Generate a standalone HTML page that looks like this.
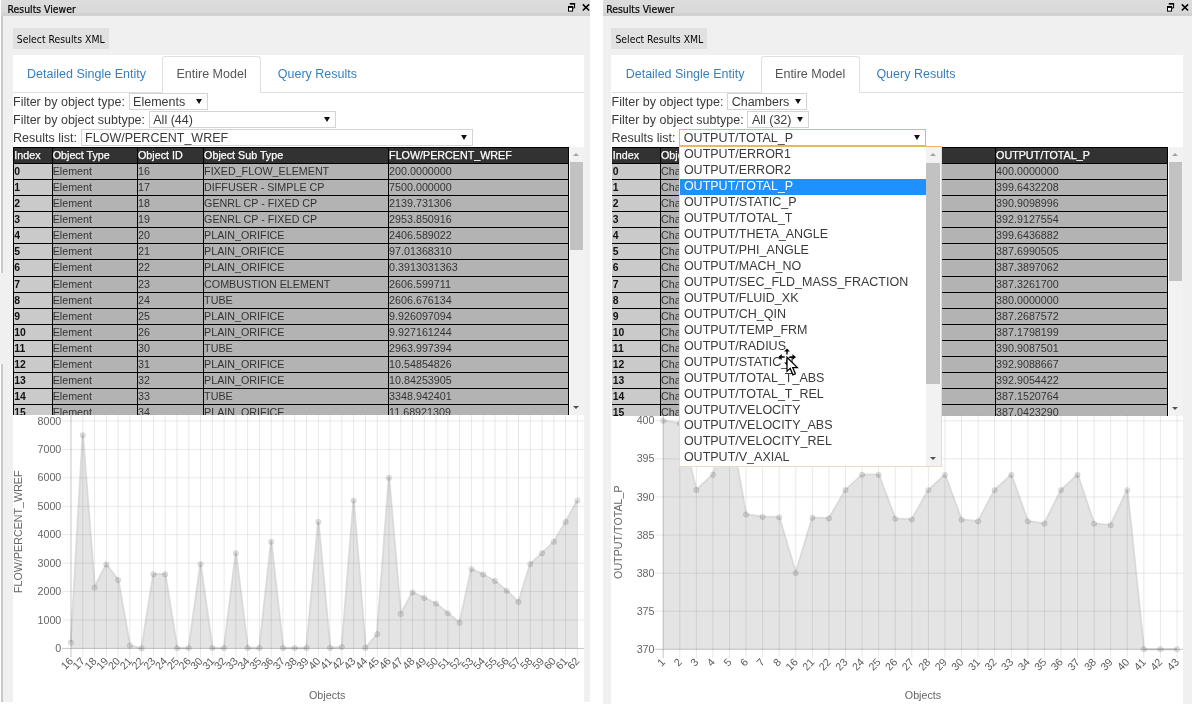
<!DOCTYPE html>
<html lang="en"><head><meta charset="utf-8"><title>Results Viewer</title>
<style>
*{box-sizing:border-box}
html,body{margin:0;padding:0}
body{width:1192px;height:706px;background:#fff;position:relative;overflow:hidden;font-family:"Liberation Sans",Arial,sans-serif;color:#333;font-size:12.5px}
.abs,.abs>*{position:absolute}
.panel{position:absolute;top:0;background:#f0f0f0;overflow:hidden}
.tbar{position:absolute;left:0;top:0;right:0;height:16px;background:linear-gradient(#dcdcdc,#d9d9d9 75%,#d0d0d0 88%,#d2d2d2);}
.ttl{position:absolute;top:2px;line-height:14px;font-family:"DejaVu Sans Condensed","DejaVu Sans","Liberation Sans",sans-serif;font-stretch:condensed;font-size:10.35px;color:#000;white-space:nowrap;-webkit-text-stroke:0.2px #000}
.btn{position:absolute;background:#e1e1e1;font-family:"DejaVu Sans Condensed","DejaVu Sans","Liberation Sans",sans-serif;font-stretch:condensed;font-size:10.35px;color:#000;text-align:center;white-space:nowrap}
.content{position:absolute;background:#fff}
.tabline{position:absolute;height:1px;background:#ddd}
.tab{position:absolute;top:56px;height:37px;line-height:37.5px;white-space:nowrap;color:#3a7eb9;font-size:12.5px}
.tab.act{color:#555;line-height:35.5px;border:1px solid #e0e0e0;border-bottom:1px solid #fff;border-radius:3.5px 3.5px 0 0;background:#fff;text-align:center}
.lbl{position:absolute;white-space:nowrap;font-size:12.5px;color:#3a3a3a;line-height:17px;height:17px}
.sel{position:absolute;height:17.5px;background:#fff;border:1px solid #d4d4d4;font-size:12.5px;line-height:17.5px;color:#3a3a3a;white-space:nowrap;padding-left:3.6px;overflow:hidden}
.sel.foc{border-color:#ecb75c}
.sel i{position:absolute;top:5.6px;width:0;height:0;border-left:3.1px solid transparent;border-right:3.1px solid transparent;border-top:5.6px solid #111}
.tw{position:absolute;overflow:hidden;background:#fff}
.tbl{position:absolute;left:0;top:0;font-size:10.72px;color:#333}
.tbl div{position:absolute;white-space:nowrap;overflow:hidden}
.hd{background:#323232;color:#fff;-webkit-text-stroke:0.25px #fff}
.c0{background:#cacaca;color:#111;font-weight:bold;font-size:10.4px}
.c1{background:#b3b3b3}
.sb{position:absolute;background:#f2f2f2}
.sb b{position:absolute;left:0;right:1px;background:#c2c2c2}
.sb u,.sb s{position:absolute;left:50%;margin-left:-3.5px;width:0;height:0;border-left:3.5px solid transparent;border-right:3.5px solid transparent}
.sb u{border-bottom:3.5px solid #a3a3a3}
.sb s{border-top:3.5px solid #505050}
.dd{position:absolute;background:#fff;border:1px solid #e9dcc0;border-top-color:#ecb75c;font-size:12.5px;color:#3a3a3a;overflow:hidden}
.dd p{margin:0;position:absolute;left:0;height:15.95px;line-height:15.5px;padding-left:3.9px;white-space:nowrap}
.dd p.on{background:#1e90ff;color:#fff}
#app{position:absolute;left:0;top:0;width:1192px;height:706px;will-change:transform}
svg{position:absolute;display:block;overflow:visible}
svg text{font-family:"Liberation Sans",Arial,sans-serif}
</style></head>
<body>
<div id="app">
<div class="panel" style="left:1px;width:589.3px;height:701.7px;border-left:2px solid #cacaca"></div><div class="tbar" style="left:1px;width:589.3px"></div><div class="ttl" style="left:7.6px">Results Viewer</div><svg width="24" height="12" viewBox="0 0 24 12" style="left:566.9px;top:2px"><path d="M3.3 1.6h4.3v4.4h-1.6" fill="none" stroke="#000" stroke-width="1"/><path d="M2.8 1.8h5.3" stroke="#000" stroke-width="1.6"/><rect x="1.5" y="4.6" width="4.1" height="4.5" fill="#fff" stroke="#000" stroke-width="1"/><path d="M1 5h5.1" stroke="#000" stroke-width="1.8"/><path d="M15.8 2.4l6.3 6.1M22.1 2.4l-6.3 6.1" stroke="#000" stroke-width="1.5" fill="none"/></svg><div class="btn" style="left:13px;top:27.5px;width:95.5px;padding-left:0px;height:21.5px;line-height:23.5px">Select Results XML</div><div class="content" style="left:13px;top:55px;width:571.2px;height:651px"></div><div class="tabline" style="left:13px;top:91.6px;width:571.2px"></div><div class="tab" style="left:27.1px">Detailed Single Entity</div><div class="tab act" style="left:162.2px;width:98.8px">Entire Model</div><div class="tab" style="left:277.8px">Query Results</div><div class="lbl" style="left:13px;top:94px">Filter by object type:</div><div class="lbl" style="left:13px;top:112px">Filter by object subtype:</div><div class="lbl" style="left:13px;top:130px">Results list:</div><div class="sel" style="left:128.5px;top:92.8px;width:79.5px">Elements<i style="right:4.9px"></i></div><div class="sel" style="left:148.7px;top:110.8px;width:187.3px">All (44)<i style="right:4.9px"></i></div><div class="sel" style="left:80.5px;top:128.7px;width:392px">FLOW/PERCENT_WREF<i style="right:4.9px"></i></div><div class="tw" style="left:13px;top:147px;width:556.2px;height:268.3px"><div class="tbl" style="width:556.2px;height:268.3px;background:#000"><div class="hd" style="left:0.9px;top:0.6px;width:38.1px;height:15.2px;line-height:15.8px;text-indent:0.4px">Index</div><div class="hd" style="left:40px;top:0.6px;width:84.3px;height:15.2px;line-height:15.8px;text-indent:-0.3px">Object Type</div><div class="hd" style="left:125.3px;top:0.6px;width:65.1px;height:15.2px;line-height:15.8px;text-indent:-0.3px">Object ID</div><div class="hd" style="left:191.4px;top:0.6px;width:184px;height:15.2px;line-height:15.8px;text-indent:-0.3px">Object Sub Type</div><div class="hd" style="left:376.4px;top:0.6px;width:178.8px;height:15.2px;line-height:15.8px;text-indent:-0.3px">FLOW/PERCENT_WREF</div><div class="c0" style="left:0.9px;top:16.8px;width:38.1px;height:15.11px;line-height:15.71px;text-indent:0.4px">0</div><div class="c1" style="left:40px;top:16.8px;width:84.3px;height:15.11px;line-height:15.71px;text-indent:-0.3px">Element</div><div class="c1" style="left:125.3px;top:16.8px;width:65.1px;height:15.11px;line-height:15.71px;text-indent:-0.3px">16</div><div class="c1" style="left:191.4px;top:16.8px;width:184px;height:15.11px;line-height:15.71px;text-indent:-0.3px">FIXED_FLOW_ELEMENT</div><div class="c1" style="left:376.4px;top:16.8px;width:178.8px;height:15.11px;line-height:15.71px;text-indent:-0.3px">200.0000000</div><div class="c0" style="left:0.9px;top:32.91px;width:38.1px;height:15.11px;line-height:15.71px;text-indent:0.4px">1</div><div class="c1" style="left:40px;top:32.91px;width:84.3px;height:15.11px;line-height:15.71px;text-indent:-0.3px">Element</div><div class="c1" style="left:125.3px;top:32.91px;width:65.1px;height:15.11px;line-height:15.71px;text-indent:-0.3px">17</div><div class="c1" style="left:191.4px;top:32.91px;width:184px;height:15.11px;line-height:15.71px;text-indent:-0.3px">DIFFUSER - SIMPLE CP</div><div class="c1" style="left:376.4px;top:32.91px;width:178.8px;height:15.11px;line-height:15.71px;text-indent:-0.3px">7500.000000</div><div class="c0" style="left:0.9px;top:49.01px;width:38.1px;height:15.11px;line-height:15.71px;text-indent:0.4px">2</div><div class="c1" style="left:40px;top:49.01px;width:84.3px;height:15.11px;line-height:15.71px;text-indent:-0.3px">Element</div><div class="c1" style="left:125.3px;top:49.01px;width:65.1px;height:15.11px;line-height:15.71px;text-indent:-0.3px">18</div><div class="c1" style="left:191.4px;top:49.01px;width:184px;height:15.11px;line-height:15.71px;text-indent:-0.3px">GENRL CP - FIXED CP</div><div class="c1" style="left:376.4px;top:49.01px;width:178.8px;height:15.11px;line-height:15.71px;text-indent:-0.3px">2139.731306</div><div class="c0" style="left:0.9px;top:65.12px;width:38.1px;height:15.11px;line-height:15.71px;text-indent:0.4px">3</div><div class="c1" style="left:40px;top:65.12px;width:84.3px;height:15.11px;line-height:15.71px;text-indent:-0.3px">Element</div><div class="c1" style="left:125.3px;top:65.12px;width:65.1px;height:15.11px;line-height:15.71px;text-indent:-0.3px">19</div><div class="c1" style="left:191.4px;top:65.12px;width:184px;height:15.11px;line-height:15.71px;text-indent:-0.3px">GENRL CP - FIXED CP</div><div class="c1" style="left:376.4px;top:65.12px;width:178.8px;height:15.11px;line-height:15.71px;text-indent:-0.3px">2953.850916</div><div class="c0" style="left:0.9px;top:81.23px;width:38.1px;height:15.11px;line-height:15.71px;text-indent:0.4px">4</div><div class="c1" style="left:40px;top:81.23px;width:84.3px;height:15.11px;line-height:15.71px;text-indent:-0.3px">Element</div><div class="c1" style="left:125.3px;top:81.23px;width:65.1px;height:15.11px;line-height:15.71px;text-indent:-0.3px">20</div><div class="c1" style="left:191.4px;top:81.23px;width:184px;height:15.11px;line-height:15.71px;text-indent:-0.3px">PLAIN_ORIFICE</div><div class="c1" style="left:376.4px;top:81.23px;width:178.8px;height:15.11px;line-height:15.71px;text-indent:-0.3px">2406.589022</div><div class="c0" style="left:0.9px;top:97.33px;width:38.1px;height:15.11px;line-height:15.71px;text-indent:0.4px">5</div><div class="c1" style="left:40px;top:97.33px;width:84.3px;height:15.11px;line-height:15.71px;text-indent:-0.3px">Element</div><div class="c1" style="left:125.3px;top:97.33px;width:65.1px;height:15.11px;line-height:15.71px;text-indent:-0.3px">21</div><div class="c1" style="left:191.4px;top:97.33px;width:184px;height:15.11px;line-height:15.71px;text-indent:-0.3px">PLAIN_ORIFICE</div><div class="c1" style="left:376.4px;top:97.33px;width:178.8px;height:15.11px;line-height:15.71px;text-indent:-0.3px">97.01368310</div><div class="c0" style="left:0.9px;top:113.44px;width:38.1px;height:15.11px;line-height:15.71px;text-indent:0.4px">6</div><div class="c1" style="left:40px;top:113.44px;width:84.3px;height:15.11px;line-height:15.71px;text-indent:-0.3px">Element</div><div class="c1" style="left:125.3px;top:113.44px;width:65.1px;height:15.11px;line-height:15.71px;text-indent:-0.3px">22</div><div class="c1" style="left:191.4px;top:113.44px;width:184px;height:15.11px;line-height:15.71px;text-indent:-0.3px">PLAIN_ORIFICE</div><div class="c1" style="left:376.4px;top:113.44px;width:178.8px;height:15.11px;line-height:15.71px;text-indent:-0.3px">0.3913031363</div><div class="c0" style="left:0.9px;top:129.55px;width:38.1px;height:15.11px;line-height:15.71px;text-indent:0.4px">7</div><div class="c1" style="left:40px;top:129.55px;width:84.3px;height:15.11px;line-height:15.71px;text-indent:-0.3px">Element</div><div class="c1" style="left:125.3px;top:129.55px;width:65.1px;height:15.11px;line-height:15.71px;text-indent:-0.3px">23</div><div class="c1" style="left:191.4px;top:129.55px;width:184px;height:15.11px;line-height:15.71px;text-indent:-0.3px">COMBUSTION ELEMENT</div><div class="c1" style="left:376.4px;top:129.55px;width:178.8px;height:15.11px;line-height:15.71px;text-indent:-0.3px">2606.599711</div><div class="c0" style="left:0.9px;top:145.66px;width:38.1px;height:15.11px;line-height:15.71px;text-indent:0.4px">8</div><div class="c1" style="left:40px;top:145.66px;width:84.3px;height:15.11px;line-height:15.71px;text-indent:-0.3px">Element</div><div class="c1" style="left:125.3px;top:145.66px;width:65.1px;height:15.11px;line-height:15.71px;text-indent:-0.3px">24</div><div class="c1" style="left:191.4px;top:145.66px;width:184px;height:15.11px;line-height:15.71px;text-indent:-0.3px">TUBE</div><div class="c1" style="left:376.4px;top:145.66px;width:178.8px;height:15.11px;line-height:15.71px;text-indent:-0.3px">2606.676134</div><div class="c0" style="left:0.9px;top:161.76px;width:38.1px;height:15.11px;line-height:15.71px;text-indent:0.4px">9</div><div class="c1" style="left:40px;top:161.76px;width:84.3px;height:15.11px;line-height:15.71px;text-indent:-0.3px">Element</div><div class="c1" style="left:125.3px;top:161.76px;width:65.1px;height:15.11px;line-height:15.71px;text-indent:-0.3px">25</div><div class="c1" style="left:191.4px;top:161.76px;width:184px;height:15.11px;line-height:15.71px;text-indent:-0.3px">PLAIN_ORIFICE</div><div class="c1" style="left:376.4px;top:161.76px;width:178.8px;height:15.11px;line-height:15.71px;text-indent:-0.3px">9.926097094</div><div class="c0" style="left:0.9px;top:177.87px;width:38.1px;height:15.11px;line-height:15.71px;text-indent:0.4px">10</div><div class="c1" style="left:40px;top:177.87px;width:84.3px;height:15.11px;line-height:15.71px;text-indent:-0.3px">Element</div><div class="c1" style="left:125.3px;top:177.87px;width:65.1px;height:15.11px;line-height:15.71px;text-indent:-0.3px">26</div><div class="c1" style="left:191.4px;top:177.87px;width:184px;height:15.11px;line-height:15.71px;text-indent:-0.3px">PLAIN_ORIFICE</div><div class="c1" style="left:376.4px;top:177.87px;width:178.8px;height:15.11px;line-height:15.71px;text-indent:-0.3px">9.927161244</div><div class="c0" style="left:0.9px;top:193.98px;width:38.1px;height:15.11px;line-height:15.71px;text-indent:0.4px">11</div><div class="c1" style="left:40px;top:193.98px;width:84.3px;height:15.11px;line-height:15.71px;text-indent:-0.3px">Element</div><div class="c1" style="left:125.3px;top:193.98px;width:65.1px;height:15.11px;line-height:15.71px;text-indent:-0.3px">30</div><div class="c1" style="left:191.4px;top:193.98px;width:184px;height:15.11px;line-height:15.71px;text-indent:-0.3px">TUBE</div><div class="c1" style="left:376.4px;top:193.98px;width:178.8px;height:15.11px;line-height:15.71px;text-indent:-0.3px">2963.997394</div><div class="c0" style="left:0.9px;top:210.08px;width:38.1px;height:15.11px;line-height:15.71px;text-indent:0.4px">12</div><div class="c1" style="left:40px;top:210.08px;width:84.3px;height:15.11px;line-height:15.71px;text-indent:-0.3px">Element</div><div class="c1" style="left:125.3px;top:210.08px;width:65.1px;height:15.11px;line-height:15.71px;text-indent:-0.3px">31</div><div class="c1" style="left:191.4px;top:210.08px;width:184px;height:15.11px;line-height:15.71px;text-indent:-0.3px">PLAIN_ORIFICE</div><div class="c1" style="left:376.4px;top:210.08px;width:178.8px;height:15.11px;line-height:15.71px;text-indent:-0.3px">10.54854826</div><div class="c0" style="left:0.9px;top:226.19px;width:38.1px;height:15.11px;line-height:15.71px;text-indent:0.4px">13</div><div class="c1" style="left:40px;top:226.19px;width:84.3px;height:15.11px;line-height:15.71px;text-indent:-0.3px">Element</div><div class="c1" style="left:125.3px;top:226.19px;width:65.1px;height:15.11px;line-height:15.71px;text-indent:-0.3px">32</div><div class="c1" style="left:191.4px;top:226.19px;width:184px;height:15.11px;line-height:15.71px;text-indent:-0.3px">PLAIN_ORIFICE</div><div class="c1" style="left:376.4px;top:226.19px;width:178.8px;height:15.11px;line-height:15.71px;text-indent:-0.3px">10.84253905</div><div class="c0" style="left:0.9px;top:242.3px;width:38.1px;height:15.11px;line-height:15.71px;text-indent:0.4px">14</div><div class="c1" style="left:40px;top:242.3px;width:84.3px;height:15.11px;line-height:15.71px;text-indent:-0.3px">Element</div><div class="c1" style="left:125.3px;top:242.3px;width:65.1px;height:15.11px;line-height:15.71px;text-indent:-0.3px">33</div><div class="c1" style="left:191.4px;top:242.3px;width:184px;height:15.11px;line-height:15.71px;text-indent:-0.3px">TUBE</div><div class="c1" style="left:376.4px;top:242.3px;width:178.8px;height:15.11px;line-height:15.71px;text-indent:-0.3px">3348.942401</div><div class="c0" style="left:0.9px;top:258.4px;width:38.1px;height:15.11px;line-height:15.71px;text-indent:0.4px">15</div><div class="c1" style="left:40px;top:258.4px;width:84.3px;height:15.11px;line-height:15.71px;text-indent:-0.3px">Element</div><div class="c1" style="left:125.3px;top:258.4px;width:65.1px;height:15.11px;line-height:15.71px;text-indent:-0.3px">34</div><div class="c1" style="left:191.4px;top:258.4px;width:184px;height:15.11px;line-height:15.71px;text-indent:-0.3px">PLAIN_ORIFICE</div><div class="c1" style="left:376.4px;top:258.4px;width:178.8px;height:15.11px;line-height:15.71px;text-indent:-0.3px">11.68921309</div></div></div><div class="sb" style="left:569.5px;top:147.1px;width:14.4px;height:268.3px"><u style="top:6px"></u><b style="top:15.2px;height:87.8px"></b><s style="bottom:6.2px"></s></div>
<svg width="571.2" height="287" viewBox="13 415.1 571.2 287" style="left:13px;top:415.1px" font-size="10.72" fill="#666"><g stroke-width="0.9" fill="none"><line x1="71" y1="415.1" x2="71" y2="657.4" stroke="rgba(0,0,0,0.25)"/><line x1="82.78" y1="415.1" x2="82.78" y2="657.4" stroke="rgba(0,0,0,0.1)"/><line x1="94.55" y1="415.1" x2="94.55" y2="657.4" stroke="rgba(0,0,0,0.1)"/><line x1="106.33" y1="415.1" x2="106.33" y2="657.4" stroke="rgba(0,0,0,0.1)"/><line x1="118.11" y1="415.1" x2="118.11" y2="657.4" stroke="rgba(0,0,0,0.1)"/><line x1="129.88" y1="415.1" x2="129.88" y2="657.4" stroke="rgba(0,0,0,0.1)"/><line x1="141.66" y1="415.1" x2="141.66" y2="657.4" stroke="rgba(0,0,0,0.1)"/><line x1="153.44" y1="415.1" x2="153.44" y2="657.4" stroke="rgba(0,0,0,0.1)"/><line x1="165.21" y1="415.1" x2="165.21" y2="657.4" stroke="rgba(0,0,0,0.1)"/><line x1="176.99" y1="415.1" x2="176.99" y2="657.4" stroke="rgba(0,0,0,0.1)"/><line x1="188.77" y1="415.1" x2="188.77" y2="657.4" stroke="rgba(0,0,0,0.1)"/><line x1="200.54" y1="415.1" x2="200.54" y2="657.4" stroke="rgba(0,0,0,0.1)"/><line x1="212.32" y1="415.1" x2="212.32" y2="657.4" stroke="rgba(0,0,0,0.1)"/><line x1="224.1" y1="415.1" x2="224.1" y2="657.4" stroke="rgba(0,0,0,0.1)"/><line x1="235.87" y1="415.1" x2="235.87" y2="657.4" stroke="rgba(0,0,0,0.1)"/><line x1="247.65" y1="415.1" x2="247.65" y2="657.4" stroke="rgba(0,0,0,0.1)"/><line x1="259.43" y1="415.1" x2="259.43" y2="657.4" stroke="rgba(0,0,0,0.1)"/><line x1="271.2" y1="415.1" x2="271.2" y2="657.4" stroke="rgba(0,0,0,0.1)"/><line x1="282.98" y1="415.1" x2="282.98" y2="657.4" stroke="rgba(0,0,0,0.1)"/><line x1="294.76" y1="415.1" x2="294.76" y2="657.4" stroke="rgba(0,0,0,0.1)"/><line x1="306.53" y1="415.1" x2="306.53" y2="657.4" stroke="rgba(0,0,0,0.1)"/><line x1="318.31" y1="415.1" x2="318.31" y2="657.4" stroke="rgba(0,0,0,0.1)"/><line x1="330.09" y1="415.1" x2="330.09" y2="657.4" stroke="rgba(0,0,0,0.1)"/><line x1="341.87" y1="415.1" x2="341.87" y2="657.4" stroke="rgba(0,0,0,0.1)"/><line x1="353.64" y1="415.1" x2="353.64" y2="657.4" stroke="rgba(0,0,0,0.1)"/><line x1="365.42" y1="415.1" x2="365.42" y2="657.4" stroke="rgba(0,0,0,0.1)"/><line x1="377.2" y1="415.1" x2="377.2" y2="657.4" stroke="rgba(0,0,0,0.1)"/><line x1="388.97" y1="415.1" x2="388.97" y2="657.4" stroke="rgba(0,0,0,0.1)"/><line x1="400.75" y1="415.1" x2="400.75" y2="657.4" stroke="rgba(0,0,0,0.1)"/><line x1="412.53" y1="415.1" x2="412.53" y2="657.4" stroke="rgba(0,0,0,0.1)"/><line x1="424.3" y1="415.1" x2="424.3" y2="657.4" stroke="rgba(0,0,0,0.1)"/><line x1="436.08" y1="415.1" x2="436.08" y2="657.4" stroke="rgba(0,0,0,0.1)"/><line x1="447.86" y1="415.1" x2="447.86" y2="657.4" stroke="rgba(0,0,0,0.1)"/><line x1="459.63" y1="415.1" x2="459.63" y2="657.4" stroke="rgba(0,0,0,0.1)"/><line x1="471.41" y1="415.1" x2="471.41" y2="657.4" stroke="rgba(0,0,0,0.1)"/><line x1="483.19" y1="415.1" x2="483.19" y2="657.4" stroke="rgba(0,0,0,0.1)"/><line x1="494.96" y1="415.1" x2="494.96" y2="657.4" stroke="rgba(0,0,0,0.1)"/><line x1="506.74" y1="415.1" x2="506.74" y2="657.4" stroke="rgba(0,0,0,0.1)"/><line x1="518.52" y1="415.1" x2="518.52" y2="657.4" stroke="rgba(0,0,0,0.1)"/><line x1="530.29" y1="415.1" x2="530.29" y2="657.4" stroke="rgba(0,0,0,0.1)"/><line x1="542.07" y1="415.1" x2="542.07" y2="657.4" stroke="rgba(0,0,0,0.1)"/><line x1="553.85" y1="415.1" x2="553.85" y2="657.4" stroke="rgba(0,0,0,0.1)"/><line x1="565.62" y1="415.1" x2="565.62" y2="657.4" stroke="rgba(0,0,0,0.1)"/><line x1="577.4" y1="415.1" x2="577.4" y2="657.4" stroke="rgba(0,0,0,0.1)"/><line x1="62.1" y1="421.1" x2="584" y2="421.1" stroke="rgba(0,0,0,0.1)"/><line x1="62.1" y1="449.53" x2="584" y2="449.53" stroke="rgba(0,0,0,0.1)"/><line x1="62.1" y1="477.95" x2="584" y2="477.95" stroke="rgba(0,0,0,0.1)"/><line x1="62.1" y1="506.38" x2="584" y2="506.38" stroke="rgba(0,0,0,0.1)"/><line x1="62.1" y1="534.8" x2="584" y2="534.8" stroke="rgba(0,0,0,0.1)"/><line x1="62.1" y1="563.23" x2="584" y2="563.23" stroke="rgba(0,0,0,0.1)"/><line x1="62.1" y1="591.65" x2="584" y2="591.65" stroke="rgba(0,0,0,0.1)"/><line x1="62.1" y1="620.08" x2="584" y2="620.08" stroke="rgba(0,0,0,0.1)"/><line x1="62.1" y1="648.5" x2="584" y2="648.5" stroke="rgba(0,0,0,0.25)"/></g><g opacity="0.1"><path d="M71 642.82 L82.78 435.31 L94.55 587.68 L106.33 564.54 L118.11 580.09 L129.88 645.74 L141.66 648.49 L153.44 574.41 L165.21 574.41 L176.99 648.22 L188.77 648.22 L200.54 564.25 L212.32 648.2 L224.1 648.19 L235.87 553.31 L247.65 648.17 L259.43 648.15 L271.2 541.91 L282.98 648.12 L294.76 648.12 L306.53 648.11 L318.31 522.01 L330.09 648.09 L341.87 647.22 L353.64 500.69 L365.42 648.06 L377.2 634.29 L388.97 477.95 L400.75 614.11 L412.53 592.5 L424.3 598.05 L436.08 603.73 L447.86 613.25 L459.63 622.92 L471.41 569.19 L483.19 574.6 L494.96 581.13 L506.74 590.94 L518.52 602.17 L530.29 564.08 L542.07 553.28 L553.85 541.91 L565.62 522.01 L577.4 500.69 L577.4 648.5 L71 648.5 Z" fill="#000" stroke="none"/><path d="M71 642.82 L82.78 435.31 L94.55 587.68 L106.33 564.54 L118.11 580.09 L129.88 645.74 L141.66 648.49 L153.44 574.41 L165.21 574.41 L176.99 648.22 L188.77 648.22 L200.54 564.25 L212.32 648.2 L224.1 648.19 L235.87 553.31 L247.65 648.17 L259.43 648.15 L271.2 541.91 L282.98 648.12 L294.76 648.12 L306.53 648.11 L318.31 522.01 L330.09 648.09 L341.87 647.22 L353.64 500.69 L365.42 648.06 L377.2 634.29 L388.97 477.95 L400.75 614.11 L412.53 592.5 L424.3 598.05 L436.08 603.73 L447.86 613.25 L459.63 622.92 L471.41 569.19 L483.19 574.6 L494.96 581.13 L506.74 590.94 L518.52 602.17 L530.29 564.08 L542.07 553.28 L553.85 541.91 L565.62 522.01 L577.4 500.69" fill="none" stroke="#000" stroke-width="2.5" stroke-linejoin="round"/></g><path d="M71 642.82 L82.78 435.31 L94.55 587.68 L106.33 564.54 L118.11 580.09 L129.88 645.74 L141.66 648.49 L153.44 574.41 L165.21 574.41 L176.99 648.22 L188.77 648.22 L200.54 564.25 L212.32 648.2 L224.1 648.19 L235.87 553.31 L247.65 648.17 L259.43 648.15 L271.2 541.91 L282.98 648.12 L294.76 648.12 L306.53 648.11 L318.31 522.01 L330.09 648.09 L341.87 647.22 L353.64 500.69 L365.42 648.06 L377.2 634.29 L388.97 477.95 L400.75 614.11 L412.53 592.5 L424.3 598.05 L436.08 603.73 L447.86 613.25 L459.63 622.92 L471.41 569.19 L483.19 574.6 L494.96 581.13 L506.74 590.94 L518.52 602.17 L530.29 564.08 L542.07 553.28 L553.85 541.91 L565.62 522.01 L577.4 500.69" fill="none" stroke="rgba(0,0,0,0.05)" stroke-width="1.4" stroke-linejoin="round"/><g fill="rgba(0,0,0,0.1)" stroke="rgba(0,0,0,0.1)" stroke-width="0.9"><circle cx="71" cy="642.82" r="2.7"/><circle cx="82.78" cy="435.31" r="2.7"/><circle cx="94.55" cy="587.68" r="2.7"/><circle cx="106.33" cy="564.54" r="2.7"/><circle cx="118.11" cy="580.09" r="2.7"/><circle cx="129.88" cy="645.74" r="2.7"/><circle cx="141.66" cy="648.49" r="2.7"/><circle cx="153.44" cy="574.41" r="2.7"/><circle cx="165.21" cy="574.41" r="2.7"/><circle cx="176.99" cy="648.22" r="2.7"/><circle cx="188.77" cy="648.22" r="2.7"/><circle cx="200.54" cy="564.25" r="2.7"/><circle cx="212.32" cy="648.2" r="2.7"/><circle cx="224.1" cy="648.19" r="2.7"/><circle cx="235.87" cy="553.31" r="2.7"/><circle cx="247.65" cy="648.17" r="2.7"/><circle cx="259.43" cy="648.15" r="2.7"/><circle cx="271.2" cy="541.91" r="2.7"/><circle cx="282.98" cy="648.12" r="2.7"/><circle cx="294.76" cy="648.12" r="2.7"/><circle cx="306.53" cy="648.11" r="2.7"/><circle cx="318.31" cy="522.01" r="2.7"/><circle cx="330.09" cy="648.09" r="2.7"/><circle cx="341.87" cy="647.22" r="2.7"/><circle cx="353.64" cy="500.69" r="2.7"/><circle cx="365.42" cy="648.06" r="2.7"/><circle cx="377.2" cy="634.29" r="2.7"/><circle cx="388.97" cy="477.95" r="2.7"/><circle cx="400.75" cy="614.11" r="2.7"/><circle cx="412.53" cy="592.5" r="2.7"/><circle cx="424.3" cy="598.05" r="2.7"/><circle cx="436.08" cy="603.73" r="2.7"/><circle cx="447.86" cy="613.25" r="2.7"/><circle cx="459.63" cy="622.92" r="2.7"/><circle cx="471.41" cy="569.19" r="2.7"/><circle cx="483.19" cy="574.6" r="2.7"/><circle cx="494.96" cy="581.13" r="2.7"/><circle cx="506.74" cy="590.94" r="2.7"/><circle cx="518.52" cy="602.17" r="2.7"/><circle cx="530.29" cy="564.08" r="2.7"/><circle cx="542.07" cy="553.28" r="2.7"/><circle cx="553.85" cy="541.91" r="2.7"/><circle cx="565.62" cy="522.01" r="2.7"/><circle cx="577.4" cy="500.69" r="2.7"/></g><g text-anchor="end"><text x="61.3" y="424.7">8000</text><text x="61.3" y="453.13">7000</text><text x="61.3" y="481.55">6000</text><text x="61.3" y="509.98">5000</text><text x="61.3" y="538.4">4000</text><text x="61.3" y="566.83">3000</text><text x="61.3" y="595.25">2000</text><text x="61.3" y="623.68">1000</text><text x="61.3" y="652.1">0</text></g><g text-anchor="end" fill="#5c5c5c"><text transform="translate(71 659.22) rotate(-47)" x="0" y="3.7">16</text><text transform="translate(82.78 659.22) rotate(-47)" x="0" y="3.7">17</text><text transform="translate(94.55 659.22) rotate(-47)" x="0" y="3.7">18</text><text transform="translate(106.33 659.22) rotate(-47)" x="0" y="3.7">19</text><text transform="translate(118.11 659.22) rotate(-47)" x="0" y="3.7">20</text><text transform="translate(129.88 659.22) rotate(-47)" x="0" y="3.7">21</text><text transform="translate(141.66 659.22) rotate(-47)" x="0" y="3.7">22</text><text transform="translate(153.44 659.22) rotate(-47)" x="0" y="3.7">23</text><text transform="translate(165.21 659.22) rotate(-47)" x="0" y="3.7">24</text><text transform="translate(176.99 659.22) rotate(-47)" x="0" y="3.7">25</text><text transform="translate(188.77 659.22) rotate(-47)" x="0" y="3.7">26</text><text transform="translate(200.54 659.22) rotate(-47)" x="0" y="3.7">30</text><text transform="translate(212.32 659.22) rotate(-47)" x="0" y="3.7">31</text><text transform="translate(224.1 659.22) rotate(-47)" x="0" y="3.7">32</text><text transform="translate(235.87 659.22) rotate(-47)" x="0" y="3.7">33</text><text transform="translate(247.65 659.22) rotate(-47)" x="0" y="3.7">34</text><text transform="translate(259.43 659.22) rotate(-47)" x="0" y="3.7">35</text><text transform="translate(271.2 659.22) rotate(-47)" x="0" y="3.7">36</text><text transform="translate(282.98 659.22) rotate(-47)" x="0" y="3.7">37</text><text transform="translate(294.76 659.22) rotate(-47)" x="0" y="3.7">38</text><text transform="translate(306.53 659.22) rotate(-47)" x="0" y="3.7">39</text><text transform="translate(318.31 659.22) rotate(-47)" x="0" y="3.7">40</text><text transform="translate(330.09 659.22) rotate(-47)" x="0" y="3.7">41</text><text transform="translate(341.87 659.22) rotate(-47)" x="0" y="3.7">42</text><text transform="translate(353.64 659.22) rotate(-47)" x="0" y="3.7">43</text><text transform="translate(365.42 659.22) rotate(-47)" x="0" y="3.7">44</text><text transform="translate(377.2 659.22) rotate(-47)" x="0" y="3.7">45</text><text transform="translate(388.97 659.22) rotate(-47)" x="0" y="3.7">46</text><text transform="translate(400.75 659.22) rotate(-47)" x="0" y="3.7">47</text><text transform="translate(412.53 659.22) rotate(-47)" x="0" y="3.7">48</text><text transform="translate(424.3 659.22) rotate(-47)" x="0" y="3.7">49</text><text transform="translate(436.08 659.22) rotate(-47)" x="0" y="3.7">50</text><text transform="translate(447.86 659.22) rotate(-47)" x="0" y="3.7">51</text><text transform="translate(459.63 659.22) rotate(-47)" x="0" y="3.7">52</text><text transform="translate(471.41 659.22) rotate(-47)" x="0" y="3.7">53</text><text transform="translate(483.19 659.22) rotate(-47)" x="0" y="3.7">54</text><text transform="translate(494.96 659.22) rotate(-47)" x="0" y="3.7">55</text><text transform="translate(506.74 659.22) rotate(-47)" x="0" y="3.7">56</text><text transform="translate(518.52 659.22) rotate(-47)" x="0" y="3.7">57</text><text transform="translate(530.29 659.22) rotate(-47)" x="0" y="3.7">58</text><text transform="translate(542.07 659.22) rotate(-47)" x="0" y="3.7">59</text><text transform="translate(553.85 659.22) rotate(-47)" x="0" y="3.7">60</text><text transform="translate(565.62 659.22) rotate(-47)" x="0" y="3.7">61</text><text transform="translate(577.4 659.22) rotate(-47)" x="0" y="3.7">62</text></g><text text-anchor="middle" transform="translate(17.8 531.8) rotate(-90)" x="0" y="3.7">FLOW/PERCENT_WREF</text><text text-anchor="middle" x="327.2" y="699">Objects</text></svg>
<div class="panel" style="left:602.5px;width:589.5px;height:703.8px"></div><div class="tbar" style="left:602.5px;width:589.5px"></div><div class="ttl" style="left:606.2px">Results Viewer</div><svg width="24" height="12" viewBox="0 0 24 12" style="left:1165.9px;top:2px"><path d="M3.3 1.6h4.3v4.4h-1.6" fill="none" stroke="#000" stroke-width="1"/><path d="M2.8 1.8h5.3" stroke="#000" stroke-width="1.6"/><rect x="1.5" y="4.6" width="4.1" height="4.5" fill="#fff" stroke="#000" stroke-width="1"/><path d="M1 5h5.1" stroke="#000" stroke-width="1.8"/><path d="M15.8 2.4l6.3 6.1M22.1 2.4l-6.3 6.1" stroke="#000" stroke-width="1.5" fill="none"/></svg><div class="btn" style="left:611px;top:27.5px;width:96.1px;padding-left:0.6px;height:21.5px;line-height:23.5px">Select Results XML</div><div class="content" style="left:611px;top:55px;width:572.2px;height:651px"></div><div class="tabline" style="left:611.6px;top:91.6px;width:571.6px"></div><div class="tab" style="left:625.7px">Detailed Single Entity</div><div class="tab act" style="left:760.8px;width:98.8px">Entire Model</div><div class="tab" style="left:876.4px">Query Results</div><div class="lbl" style="left:611.6px;top:94px">Filter by object type:</div><div class="lbl" style="left:611.6px;top:112px">Filter by object subtype:</div><div class="lbl" style="left:611.6px;top:130px">Results list:</div><div class="sel" style="left:727.1px;top:92.8px;width:79.8px">Chambers<i style="right:4.9px"></i></div><div class="sel" style="left:747.3px;top:110.8px;width:61.6px">All (32)<i style="right:4.9px"></i></div><div class="sel foc" style="left:679.1px;top:128.7px;width:246.7px">OUTPUT/TOTAL_P<i style="right:4.9px"></i></div><div class="tw" style="left:611.5px;top:147px;width:556.7px;height:268.9px"><div class="tbl" style="width:556.7px;height:268.9px;background:#000"><div class="hd" style="left:0.9px;top:0.6px;width:47.9px;height:15.2px;line-height:15.8px;text-indent:0.4px">Index</div><div class="hd" style="left:49.8px;top:0.6px;width:84.3px;height:15.2px;line-height:15.8px;text-indent:-0.3px">Object Type</div><div class="hd" style="left:135.1px;top:0.6px;width:65.1px;height:15.2px;line-height:15.8px;text-indent:-0.3px">Object ID</div><div class="hd" style="left:201.2px;top:0.6px;width:182.7px;height:15.2px;line-height:15.8px;text-indent:-0.3px">Object Sub Type</div><div class="hd" style="left:384.9px;top:0.6px;width:170.8px;height:15.2px;line-height:15.8px;text-indent:-0.3px">OUTPUT/TOTAL_P</div><div class="c0" style="left:0.9px;top:16.8px;width:47.9px;height:15.11px;line-height:15.71px;text-indent:0.4px">0</div><div class="c1" style="left:49.8px;top:16.8px;width:84.3px;height:15.11px;line-height:15.71px;text-indent:-0.3px">Chamber</div><div class="c1" style="left:135.1px;top:16.8px;width:65.1px;height:15.11px;line-height:15.71px;text-indent:-0.3px">1</div><div class="c1" style="left:201.2px;top:16.8px;width:182.7px;height:15.11px;line-height:15.71px;text-indent:-0.3px"></div><div class="c1" style="left:384.9px;top:16.8px;width:170.8px;height:15.11px;line-height:15.71px;text-indent:-0.3px">400.0000000</div><div class="c0" style="left:0.9px;top:32.91px;width:47.9px;height:15.11px;line-height:15.71px;text-indent:0.4px">1</div><div class="c1" style="left:49.8px;top:32.91px;width:84.3px;height:15.11px;line-height:15.71px;text-indent:-0.3px">Chamber</div><div class="c1" style="left:135.1px;top:32.91px;width:65.1px;height:15.11px;line-height:15.71px;text-indent:-0.3px">2</div><div class="c1" style="left:201.2px;top:32.91px;width:182.7px;height:15.11px;line-height:15.71px;text-indent:-0.3px"></div><div class="c1" style="left:384.9px;top:32.91px;width:170.8px;height:15.11px;line-height:15.71px;text-indent:-0.3px">399.6432208</div><div class="c0" style="left:0.9px;top:49.01px;width:47.9px;height:15.11px;line-height:15.71px;text-indent:0.4px">2</div><div class="c1" style="left:49.8px;top:49.01px;width:84.3px;height:15.11px;line-height:15.71px;text-indent:-0.3px">Chamber</div><div class="c1" style="left:135.1px;top:49.01px;width:65.1px;height:15.11px;line-height:15.71px;text-indent:-0.3px">3</div><div class="c1" style="left:201.2px;top:49.01px;width:182.7px;height:15.11px;line-height:15.71px;text-indent:-0.3px"></div><div class="c1" style="left:384.9px;top:49.01px;width:170.8px;height:15.11px;line-height:15.71px;text-indent:-0.3px">390.9098996</div><div class="c0" style="left:0.9px;top:65.12px;width:47.9px;height:15.11px;line-height:15.71px;text-indent:0.4px">3</div><div class="c1" style="left:49.8px;top:65.12px;width:84.3px;height:15.11px;line-height:15.71px;text-indent:-0.3px">Chamber</div><div class="c1" style="left:135.1px;top:65.12px;width:65.1px;height:15.11px;line-height:15.71px;text-indent:-0.3px">4</div><div class="c1" style="left:201.2px;top:65.12px;width:182.7px;height:15.11px;line-height:15.71px;text-indent:-0.3px"></div><div class="c1" style="left:384.9px;top:65.12px;width:170.8px;height:15.11px;line-height:15.71px;text-indent:-0.3px">392.9127554</div><div class="c0" style="left:0.9px;top:81.23px;width:47.9px;height:15.11px;line-height:15.71px;text-indent:0.4px">4</div><div class="c1" style="left:49.8px;top:81.23px;width:84.3px;height:15.11px;line-height:15.71px;text-indent:-0.3px">Chamber</div><div class="c1" style="left:135.1px;top:81.23px;width:65.1px;height:15.11px;line-height:15.71px;text-indent:-0.3px">5</div><div class="c1" style="left:201.2px;top:81.23px;width:182.7px;height:15.11px;line-height:15.71px;text-indent:-0.3px"></div><div class="c1" style="left:384.9px;top:81.23px;width:170.8px;height:15.11px;line-height:15.71px;text-indent:-0.3px">399.6436882</div><div class="c0" style="left:0.9px;top:97.33px;width:47.9px;height:15.11px;line-height:15.71px;text-indent:0.4px">5</div><div class="c1" style="left:49.8px;top:97.33px;width:84.3px;height:15.11px;line-height:15.71px;text-indent:-0.3px">Chamber</div><div class="c1" style="left:135.1px;top:97.33px;width:65.1px;height:15.11px;line-height:15.71px;text-indent:-0.3px">6</div><div class="c1" style="left:201.2px;top:97.33px;width:182.7px;height:15.11px;line-height:15.71px;text-indent:-0.3px"></div><div class="c1" style="left:384.9px;top:97.33px;width:170.8px;height:15.11px;line-height:15.71px;text-indent:-0.3px">387.6990505</div><div class="c0" style="left:0.9px;top:113.44px;width:47.9px;height:15.11px;line-height:15.71px;text-indent:0.4px">6</div><div class="c1" style="left:49.8px;top:113.44px;width:84.3px;height:15.11px;line-height:15.71px;text-indent:-0.3px">Chamber</div><div class="c1" style="left:135.1px;top:113.44px;width:65.1px;height:15.11px;line-height:15.71px;text-indent:-0.3px">7</div><div class="c1" style="left:201.2px;top:113.44px;width:182.7px;height:15.11px;line-height:15.71px;text-indent:-0.3px"></div><div class="c1" style="left:384.9px;top:113.44px;width:170.8px;height:15.11px;line-height:15.71px;text-indent:-0.3px">387.3897062</div><div class="c0" style="left:0.9px;top:129.55px;width:47.9px;height:15.11px;line-height:15.71px;text-indent:0.4px">7</div><div class="c1" style="left:49.8px;top:129.55px;width:84.3px;height:15.11px;line-height:15.71px;text-indent:-0.3px">Chamber</div><div class="c1" style="left:135.1px;top:129.55px;width:65.1px;height:15.11px;line-height:15.71px;text-indent:-0.3px">8</div><div class="c1" style="left:201.2px;top:129.55px;width:182.7px;height:15.11px;line-height:15.71px;text-indent:-0.3px"></div><div class="c1" style="left:384.9px;top:129.55px;width:170.8px;height:15.11px;line-height:15.71px;text-indent:-0.3px">387.3261700</div><div class="c0" style="left:0.9px;top:145.66px;width:47.9px;height:15.11px;line-height:15.71px;text-indent:0.4px">8</div><div class="c1" style="left:49.8px;top:145.66px;width:84.3px;height:15.11px;line-height:15.71px;text-indent:-0.3px">Chamber</div><div class="c1" style="left:135.1px;top:145.66px;width:65.1px;height:15.11px;line-height:15.71px;text-indent:-0.3px">16</div><div class="c1" style="left:201.2px;top:145.66px;width:182.7px;height:15.11px;line-height:15.71px;text-indent:-0.3px"></div><div class="c1" style="left:384.9px;top:145.66px;width:170.8px;height:15.11px;line-height:15.71px;text-indent:-0.3px">380.0000000</div><div class="c0" style="left:0.9px;top:161.76px;width:47.9px;height:15.11px;line-height:15.71px;text-indent:0.4px">9</div><div class="c1" style="left:49.8px;top:161.76px;width:84.3px;height:15.11px;line-height:15.71px;text-indent:-0.3px">Chamber</div><div class="c1" style="left:135.1px;top:161.76px;width:65.1px;height:15.11px;line-height:15.71px;text-indent:-0.3px">21</div><div class="c1" style="left:201.2px;top:161.76px;width:182.7px;height:15.11px;line-height:15.71px;text-indent:-0.3px"></div><div class="c1" style="left:384.9px;top:161.76px;width:170.8px;height:15.11px;line-height:15.71px;text-indent:-0.3px">387.2687572</div><div class="c0" style="left:0.9px;top:177.87px;width:47.9px;height:15.11px;line-height:15.71px;text-indent:0.4px">10</div><div class="c1" style="left:49.8px;top:177.87px;width:84.3px;height:15.11px;line-height:15.71px;text-indent:-0.3px">Chamber</div><div class="c1" style="left:135.1px;top:177.87px;width:65.1px;height:15.11px;line-height:15.71px;text-indent:-0.3px">22</div><div class="c1" style="left:201.2px;top:177.87px;width:182.7px;height:15.11px;line-height:15.71px;text-indent:-0.3px"></div><div class="c1" style="left:384.9px;top:177.87px;width:170.8px;height:15.11px;line-height:15.71px;text-indent:-0.3px">387.1798199</div><div class="c0" style="left:0.9px;top:193.98px;width:47.9px;height:15.11px;line-height:15.71px;text-indent:0.4px">11</div><div class="c1" style="left:49.8px;top:193.98px;width:84.3px;height:15.11px;line-height:15.71px;text-indent:-0.3px">Chamber</div><div class="c1" style="left:135.1px;top:193.98px;width:65.1px;height:15.11px;line-height:15.71px;text-indent:-0.3px">23</div><div class="c1" style="left:201.2px;top:193.98px;width:182.7px;height:15.11px;line-height:15.71px;text-indent:-0.3px"></div><div class="c1" style="left:384.9px;top:193.98px;width:170.8px;height:15.11px;line-height:15.71px;text-indent:-0.3px">390.9087501</div><div class="c0" style="left:0.9px;top:210.08px;width:47.9px;height:15.11px;line-height:15.71px;text-indent:0.4px">12</div><div class="c1" style="left:49.8px;top:210.08px;width:84.3px;height:15.11px;line-height:15.71px;text-indent:-0.3px">Chamber</div><div class="c1" style="left:135.1px;top:210.08px;width:65.1px;height:15.11px;line-height:15.71px;text-indent:-0.3px">24</div><div class="c1" style="left:201.2px;top:210.08px;width:182.7px;height:15.11px;line-height:15.71px;text-indent:-0.3px"></div><div class="c1" style="left:384.9px;top:210.08px;width:170.8px;height:15.11px;line-height:15.71px;text-indent:-0.3px">392.9088667</div><div class="c0" style="left:0.9px;top:226.19px;width:47.9px;height:15.11px;line-height:15.71px;text-indent:0.4px">13</div><div class="c1" style="left:49.8px;top:226.19px;width:84.3px;height:15.11px;line-height:15.71px;text-indent:-0.3px">Chamber</div><div class="c1" style="left:135.1px;top:226.19px;width:65.1px;height:15.11px;line-height:15.71px;text-indent:-0.3px">25</div><div class="c1" style="left:201.2px;top:226.19px;width:182.7px;height:15.11px;line-height:15.71px;text-indent:-0.3px"></div><div class="c1" style="left:384.9px;top:226.19px;width:170.8px;height:15.11px;line-height:15.71px;text-indent:-0.3px">392.9054422</div><div class="c0" style="left:0.9px;top:242.3px;width:47.9px;height:15.11px;line-height:15.71px;text-indent:0.4px">14</div><div class="c1" style="left:49.8px;top:242.3px;width:84.3px;height:15.11px;line-height:15.71px;text-indent:-0.3px">Chamber</div><div class="c1" style="left:135.1px;top:242.3px;width:65.1px;height:15.11px;line-height:15.71px;text-indent:-0.3px">26</div><div class="c1" style="left:201.2px;top:242.3px;width:182.7px;height:15.11px;line-height:15.71px;text-indent:-0.3px"></div><div class="c1" style="left:384.9px;top:242.3px;width:170.8px;height:15.11px;line-height:15.71px;text-indent:-0.3px">387.1520764</div><div class="c0" style="left:0.9px;top:258.4px;width:47.9px;height:15.11px;line-height:15.71px;text-indent:0.4px">15</div><div class="c1" style="left:49.8px;top:258.4px;width:84.3px;height:15.11px;line-height:15.71px;text-indent:-0.3px">Chamber</div><div class="c1" style="left:135.1px;top:258.4px;width:65.1px;height:15.11px;line-height:15.71px;text-indent:-0.3px">27</div><div class="c1" style="left:201.2px;top:258.4px;width:182.7px;height:15.11px;line-height:15.71px;text-indent:-0.3px"></div><div class="c1" style="left:384.9px;top:258.4px;width:170.8px;height:15.11px;line-height:15.71px;text-indent:-0.3px">387.0423290</div></div></div><div class="sb" style="left:1168.5px;top:147.1px;width:14.4px;height:268.9px"><u style="top:6px"></u><b style="top:15.2px;height:119.2px"></b><s style="bottom:6.2px"></s></div>
<svg width="572.2" height="287" viewBox="611 415.1 572.2 287" style="left:611px;top:415.1px" font-size="10.72" fill="#666"><g stroke-width="0.9" fill="none"><line x1="663.2" y1="415.1" x2="663.2" y2="658.3" stroke="rgba(0,0,0,0.25)"/><line x1="679.77" y1="415.1" x2="679.77" y2="658.3" stroke="rgba(0,0,0,0.1)"/><line x1="696.35" y1="415.1" x2="696.35" y2="658.3" stroke="rgba(0,0,0,0.1)"/><line x1="712.92" y1="415.1" x2="712.92" y2="658.3" stroke="rgba(0,0,0,0.1)"/><line x1="729.5" y1="415.1" x2="729.5" y2="658.3" stroke="rgba(0,0,0,0.1)"/><line x1="746.07" y1="415.1" x2="746.07" y2="658.3" stroke="rgba(0,0,0,0.1)"/><line x1="762.65" y1="415.1" x2="762.65" y2="658.3" stroke="rgba(0,0,0,0.1)"/><line x1="779.22" y1="415.1" x2="779.22" y2="658.3" stroke="rgba(0,0,0,0.1)"/><line x1="795.79" y1="415.1" x2="795.79" y2="658.3" stroke="rgba(0,0,0,0.1)"/><line x1="812.37" y1="415.1" x2="812.37" y2="658.3" stroke="rgba(0,0,0,0.1)"/><line x1="828.94" y1="415.1" x2="828.94" y2="658.3" stroke="rgba(0,0,0,0.1)"/><line x1="845.52" y1="415.1" x2="845.52" y2="658.3" stroke="rgba(0,0,0,0.1)"/><line x1="862.09" y1="415.1" x2="862.09" y2="658.3" stroke="rgba(0,0,0,0.1)"/><line x1="878.66" y1="415.1" x2="878.66" y2="658.3" stroke="rgba(0,0,0,0.1)"/><line x1="895.24" y1="415.1" x2="895.24" y2="658.3" stroke="rgba(0,0,0,0.1)"/><line x1="911.81" y1="415.1" x2="911.81" y2="658.3" stroke="rgba(0,0,0,0.1)"/><line x1="928.39" y1="415.1" x2="928.39" y2="658.3" stroke="rgba(0,0,0,0.1)"/><line x1="944.96" y1="415.1" x2="944.96" y2="658.3" stroke="rgba(0,0,0,0.1)"/><line x1="961.54" y1="415.1" x2="961.54" y2="658.3" stroke="rgba(0,0,0,0.1)"/><line x1="978.11" y1="415.1" x2="978.11" y2="658.3" stroke="rgba(0,0,0,0.1)"/><line x1="994.68" y1="415.1" x2="994.68" y2="658.3" stroke="rgba(0,0,0,0.1)"/><line x1="1011.26" y1="415.1" x2="1011.26" y2="658.3" stroke="rgba(0,0,0,0.1)"/><line x1="1027.83" y1="415.1" x2="1027.83" y2="658.3" stroke="rgba(0,0,0,0.1)"/><line x1="1044.41" y1="415.1" x2="1044.41" y2="658.3" stroke="rgba(0,0,0,0.1)"/><line x1="1060.98" y1="415.1" x2="1060.98" y2="658.3" stroke="rgba(0,0,0,0.1)"/><line x1="1077.55" y1="415.1" x2="1077.55" y2="658.3" stroke="rgba(0,0,0,0.1)"/><line x1="1094.13" y1="415.1" x2="1094.13" y2="658.3" stroke="rgba(0,0,0,0.1)"/><line x1="1110.7" y1="415.1" x2="1110.7" y2="658.3" stroke="rgba(0,0,0,0.1)"/><line x1="1127.28" y1="415.1" x2="1127.28" y2="658.3" stroke="rgba(0,0,0,0.1)"/><line x1="1143.85" y1="415.1" x2="1143.85" y2="658.3" stroke="rgba(0,0,0,0.1)"/><line x1="1160.43" y1="415.1" x2="1160.43" y2="658.3" stroke="rgba(0,0,0,0.1)"/><line x1="1177" y1="415.1" x2="1177" y2="658.3" stroke="rgba(0,0,0,0.1)"/><line x1="654.3" y1="420.9" x2="1183" y2="420.9" stroke="rgba(0,0,0,0.1)"/><line x1="654.3" y1="458.98" x2="1183" y2="458.98" stroke="rgba(0,0,0,0.1)"/><line x1="654.3" y1="497.07" x2="1183" y2="497.07" stroke="rgba(0,0,0,0.1)"/><line x1="654.3" y1="535.15" x2="1183" y2="535.15" stroke="rgba(0,0,0,0.1)"/><line x1="654.3" y1="573.23" x2="1183" y2="573.23" stroke="rgba(0,0,0,0.1)"/><line x1="654.3" y1="611.32" x2="1183" y2="611.32" stroke="rgba(0,0,0,0.1)"/><line x1="654.3" y1="649.4" x2="1183" y2="649.4" stroke="rgba(0,0,0,0.25)"/></g><g opacity="0.1"><path d="M663.2 420.9 L679.77 423.62 L696.35 490.14 L712.92 474.88 L729.5 423.61 L746.07 514.59 L762.65 516.95 L779.22 517.43 L795.79 573.23 L812.37 517.87 L828.94 518.55 L845.52 490.15 L862.09 474.91 L878.66 474.94 L895.24 518.76 L911.81 519.59 L928.39 490.21 L944.96 474.98 L961.54 519.92 L978.11 521.44 L994.68 490.21 L1011.26 474.98 L1027.83 521.44 L1044.41 523.72 L1060.98 490.21 L1077.55 474.98 L1094.13 523.72 L1110.7 525.25 L1127.28 490.21 L1143.85 649.4 L1160.43 649.4 L1177 649.4 L1177 649.4 L663.2 649.4 Z" fill="#000" stroke="none"/><path d="M663.2 420.9 L679.77 423.62 L696.35 490.14 L712.92 474.88 L729.5 423.61 L746.07 514.59 L762.65 516.95 L779.22 517.43 L795.79 573.23 L812.37 517.87 L828.94 518.55 L845.52 490.15 L862.09 474.91 L878.66 474.94 L895.24 518.76 L911.81 519.59 L928.39 490.21 L944.96 474.98 L961.54 519.92 L978.11 521.44 L994.68 490.21 L1011.26 474.98 L1027.83 521.44 L1044.41 523.72 L1060.98 490.21 L1077.55 474.98 L1094.13 523.72 L1110.7 525.25 L1127.28 490.21 L1143.85 649.4 L1160.43 649.4 L1177 649.4" fill="none" stroke="#000" stroke-width="2.5" stroke-linejoin="round"/></g><path d="M663.2 420.9 L679.77 423.62 L696.35 490.14 L712.92 474.88 L729.5 423.61 L746.07 514.59 L762.65 516.95 L779.22 517.43 L795.79 573.23 L812.37 517.87 L828.94 518.55 L845.52 490.15 L862.09 474.91 L878.66 474.94 L895.24 518.76 L911.81 519.59 L928.39 490.21 L944.96 474.98 L961.54 519.92 L978.11 521.44 L994.68 490.21 L1011.26 474.98 L1027.83 521.44 L1044.41 523.72 L1060.98 490.21 L1077.55 474.98 L1094.13 523.72 L1110.7 525.25 L1127.28 490.21 L1143.85 649.4 L1160.43 649.4 L1177 649.4" fill="none" stroke="rgba(0,0,0,0.05)" stroke-width="1.4" stroke-linejoin="round"/><g fill="rgba(0,0,0,0.1)" stroke="rgba(0,0,0,0.1)" stroke-width="0.9"><circle cx="663.2" cy="420.9" r="2.7"/><circle cx="679.77" cy="423.62" r="2.7"/><circle cx="696.35" cy="490.14" r="2.7"/><circle cx="712.92" cy="474.88" r="2.7"/><circle cx="729.5" cy="423.61" r="2.7"/><circle cx="746.07" cy="514.59" r="2.7"/><circle cx="762.65" cy="516.95" r="2.7"/><circle cx="779.22" cy="517.43" r="2.7"/><circle cx="795.79" cy="573.23" r="2.7"/><circle cx="812.37" cy="517.87" r="2.7"/><circle cx="828.94" cy="518.55" r="2.7"/><circle cx="845.52" cy="490.15" r="2.7"/><circle cx="862.09" cy="474.91" r="2.7"/><circle cx="878.66" cy="474.94" r="2.7"/><circle cx="895.24" cy="518.76" r="2.7"/><circle cx="911.81" cy="519.59" r="2.7"/><circle cx="928.39" cy="490.21" r="2.7"/><circle cx="944.96" cy="474.98" r="2.7"/><circle cx="961.54" cy="519.92" r="2.7"/><circle cx="978.11" cy="521.44" r="2.7"/><circle cx="994.68" cy="490.21" r="2.7"/><circle cx="1011.26" cy="474.98" r="2.7"/><circle cx="1027.83" cy="521.44" r="2.7"/><circle cx="1044.41" cy="523.72" r="2.7"/><circle cx="1060.98" cy="490.21" r="2.7"/><circle cx="1077.55" cy="474.98" r="2.7"/><circle cx="1094.13" cy="523.72" r="2.7"/><circle cx="1110.7" cy="525.25" r="2.7"/><circle cx="1127.28" cy="490.21" r="2.7"/><circle cx="1143.85" cy="649.4" r="2.7"/><circle cx="1160.43" cy="649.4" r="2.7"/><circle cx="1177" cy="649.4" r="2.7"/></g><g text-anchor="end"><text x="654.5" y="424.5">400</text><text x="654.5" y="462.58">395</text><text x="654.5" y="500.67">390</text><text x="654.5" y="538.75">385</text><text x="654.5" y="576.83">380</text><text x="654.5" y="614.92">375</text><text x="654.5" y="653">370</text></g><g text-anchor="end" fill="#5c5c5c"><text transform="translate(663.2 660.12) rotate(-47)" x="0" y="3.7">1</text><text transform="translate(679.77 660.12) rotate(-47)" x="0" y="3.7">2</text><text transform="translate(696.35 660.12) rotate(-47)" x="0" y="3.7">3</text><text transform="translate(712.92 660.12) rotate(-47)" x="0" y="3.7">4</text><text transform="translate(729.5 660.12) rotate(-47)" x="0" y="3.7">5</text><text transform="translate(746.07 660.12) rotate(-47)" x="0" y="3.7">6</text><text transform="translate(762.65 660.12) rotate(-47)" x="0" y="3.7">7</text><text transform="translate(779.22 660.12) rotate(-47)" x="0" y="3.7">8</text><text transform="translate(795.79 660.12) rotate(-47)" x="0" y="3.7">16</text><text transform="translate(812.37 660.12) rotate(-47)" x="0" y="3.7">21</text><text transform="translate(828.94 660.12) rotate(-47)" x="0" y="3.7">22</text><text transform="translate(845.52 660.12) rotate(-47)" x="0" y="3.7">23</text><text transform="translate(862.09 660.12) rotate(-47)" x="0" y="3.7">24</text><text transform="translate(878.66 660.12) rotate(-47)" x="0" y="3.7">25</text><text transform="translate(895.24 660.12) rotate(-47)" x="0" y="3.7">26</text><text transform="translate(911.81 660.12) rotate(-47)" x="0" y="3.7">27</text><text transform="translate(928.39 660.12) rotate(-47)" x="0" y="3.7">28</text><text transform="translate(944.96 660.12) rotate(-47)" x="0" y="3.7">29</text><text transform="translate(961.54 660.12) rotate(-47)" x="0" y="3.7">30</text><text transform="translate(978.11 660.12) rotate(-47)" x="0" y="3.7">31</text><text transform="translate(994.68 660.12) rotate(-47)" x="0" y="3.7">32</text><text transform="translate(1011.26 660.12) rotate(-47)" x="0" y="3.7">33</text><text transform="translate(1027.83 660.12) rotate(-47)" x="0" y="3.7">34</text><text transform="translate(1044.41 660.12) rotate(-47)" x="0" y="3.7">35</text><text transform="translate(1060.98 660.12) rotate(-47)" x="0" y="3.7">36</text><text transform="translate(1077.55 660.12) rotate(-47)" x="0" y="3.7">37</text><text transform="translate(1094.13 660.12) rotate(-47)" x="0" y="3.7">38</text><text transform="translate(1110.7 660.12) rotate(-47)" x="0" y="3.7">39</text><text transform="translate(1127.28 660.12) rotate(-47)" x="0" y="3.7">40</text><text transform="translate(1143.85 660.12) rotate(-47)" x="0" y="3.7">41</text><text transform="translate(1160.43 660.12) rotate(-47)" x="0" y="3.7">42</text><text transform="translate(1177 660.12) rotate(-47)" x="0" y="3.7">43</text></g><text text-anchor="middle" transform="translate(617.8 532.25) rotate(-90)" x="0" y="3.7">OUTPUT/TOTAL_P</text><text text-anchor="middle" x="923" y="699">Objects</text></svg>
<div style="position:absolute;left:0;top:273px;width:4px;height:91px;background:#f0f0f0"></div>
<div class="dd" style="left:679px;top:146px;width:262.8px;height:320.8px"><p class="" style="top:0.3px;width:246.2px">OUTPUT/ERROR1</p><p class="" style="top:16.25px;width:246.2px">OUTPUT/ERROR2</p><p class="on" style="top:32.2px;width:246.2px">OUTPUT/TOTAL_P</p><p class="" style="top:48.15px;width:246.2px">OUTPUT/STATIC_P</p><p class="" style="top:64.1px;width:246.2px">OUTPUT/TOTAL_T</p><p class="" style="top:80.05px;width:246.2px">OUTPUT/THETA_ANGLE</p><p class="" style="top:96px;width:246.2px">OUTPUT/PHI_ANGLE</p><p class="" style="top:111.95px;width:246.2px">OUTPUT/MACH_NO</p><p class="" style="top:127.9px;width:246.2px">OUTPUT/SEC_FLD_MASS_FRACTION</p><p class="" style="top:143.85px;width:246.2px">OUTPUT/FLUID_XK</p><p class="" style="top:159.8px;width:246.2px">OUTPUT/CH_QIN</p><p class="" style="top:175.75px;width:246.2px">OUTPUT/TEMP_FRM</p><p class="" style="top:191.7px;width:246.2px">OUTPUT/RADIUS</p><p class="" style="top:207.65px;width:246.2px">OUTPUT/STATIC_T</p><p class="" style="top:223.6px;width:246.2px">OUTPUT/TOTAL_T_ABS</p><p class="" style="top:239.55px;width:246.2px">OUTPUT/TOTAL_T_REL</p><p class="" style="top:255.5px;width:246.2px">OUTPUT/VELOCITY</p><p class="" style="top:271.45px;width:246.2px">OUTPUT/VELOCITY_ABS</p><p class="" style="top:287.4px;width:246.2px">OUTPUT/VELOCITY_REL</p><p class="" style="top:303.35px;width:246.2px">OUTPUT/V_AXIAL</p><div class="sb" style="left:246.2px;top:0;width:14.6px;height:318.8px"><u style="top:6px"></u><b style="top:15.8px;height:221px"></b><s style="bottom:6.2px"></s></div></div>
<svg width="24" height="30" viewBox="0 0 24 30" style="left:776.5px;top:346.5px"><g fill="#000" stroke="none"><path d="M10 1.4l2.9 3.2h-2.2v3h-1.4v-3h-2.2z"/><path d="M1.5 10l3.2-2.9v2.2h3v1.4h-3v2.2z"/><path d="M18.7 10l-3.2-2.9v2.2h-3v1.4h3v2.2z"/><path d="M10 18.6l2.9-3.2h-2.2v-3h-1.4v3h-2.2z"/></g><path d="M10 10.2v14.2l3.2-3 2.7 6.4 2.5-1.1-2.7-6.2h4.7z" fill="#fff" stroke="#000" stroke-width="1.25" stroke-linejoin="miter"/></svg>
</div>
</body></html>
